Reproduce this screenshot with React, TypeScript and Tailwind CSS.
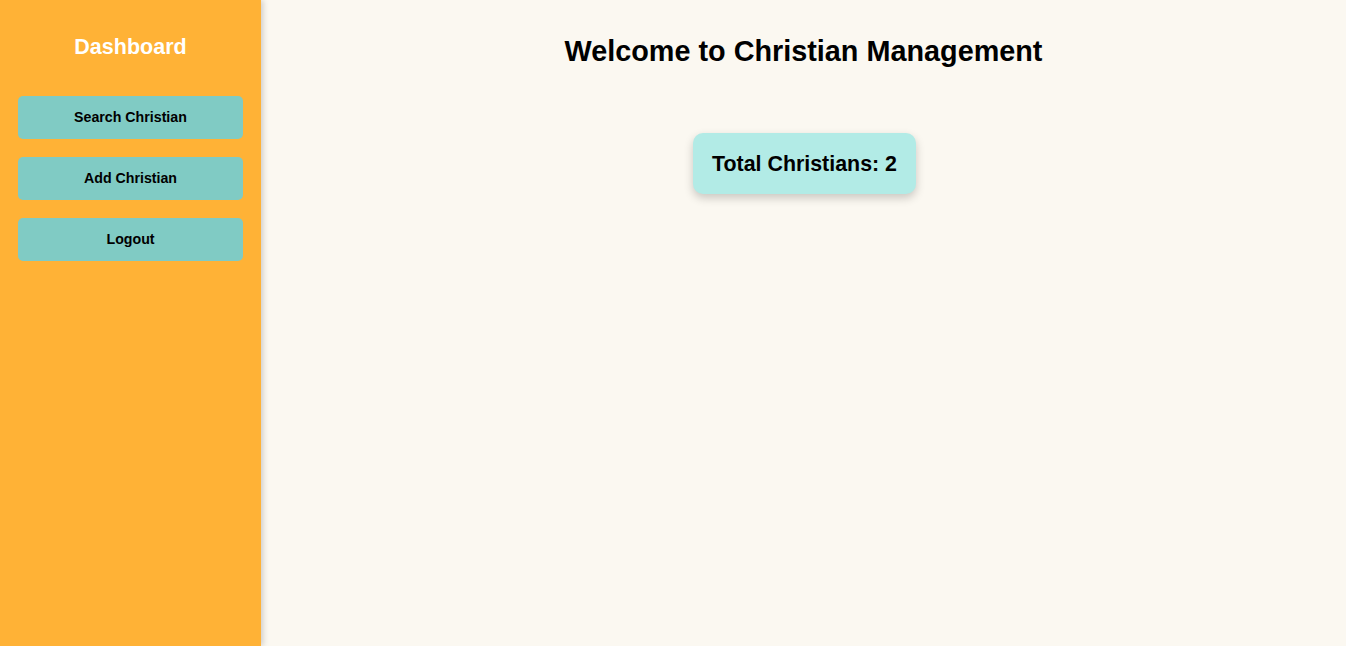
export default function App() {
  return (
    <div className="flex h-[646px] w-full bg-[#fbf8f1]" style={{ fontFamily: '"Liberation Sans", Arial, sans-serif' }}>
      <aside className="relative z-10 flex w-[261px] shrink-0 flex-col bg-[#ffb236] px-[18px] pt-[34px] shadow-[2px_0_6px_rgba(0,0,0,0.18)]">
        <h2 className="text-center text-[21.5px] font-bold leading-[26px] text-white">Dashboard</h2>
        <div className="mt-[36px] flex flex-col gap-[18px]">
          {["Search Christian", "Add Christian", "Logout"].map((t) => (
            <button key={t} className="h-[43px] w-full rounded-[5px] bg-[#80cbc4] text-[14.2px] font-bold text-black">
              {t}
            </button>
          ))}
        </div>
      </aside>
      <main className="flex flex-1 flex-col items-center pt-[34px]">
        <h1 className="text-[28.8px] font-bold leading-[34px] text-black">Welcome to Christian Management</h1>
        <div className="ml-[2px] mt-[65px] flex h-[61px] items-center rounded-[10px] bg-[#b2ebe6] px-[19px] pt-[2px] shadow-[0_4px_10px_rgba(0,0,0,0.2)]">
          <span className="text-[21.4px] font-bold text-black">Total Christians: 2</span>
        </div>
      </main>
    </div>
  );
}
